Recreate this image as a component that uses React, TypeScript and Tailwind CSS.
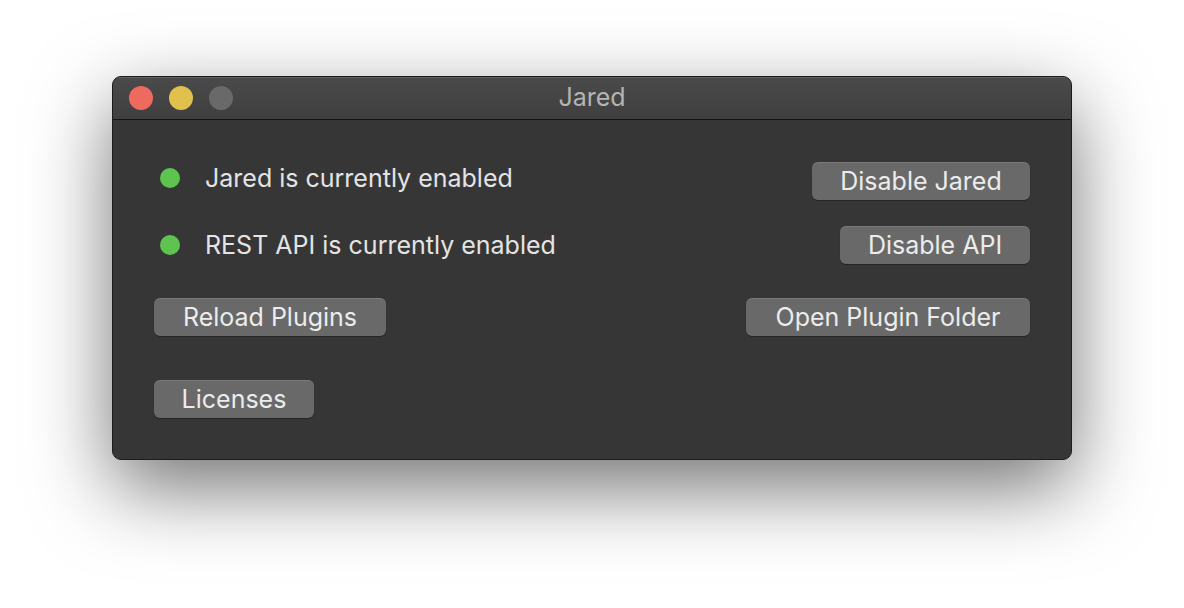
import React from "react"

const font = { fontFamily: "Inter, 'Noto Sans', 'Liberation Sans', sans-serif" }

type BtnProps = { label: string; width: string }

const MacButton: React.FC<BtnProps> = ({ label, width }) => (
  <button
    className={`${width} h-[38px] rounded-[6px] bg-[#696969] text-[25px] leading-none text-[#ececec] shadow-[inset_0_1px_0_rgba(255,255,255,0.12),0_1px_1px_rgba(0,0,0,0.35)]`}
  >
    {label}
  </button>
)

const StatusRow: React.FC<{ text: string }> = ({ text }) => (
  <div className="flex items-center">
    <span className="ml-[6px] h-[20px] w-[20px] rounded-full bg-[#5dc54f]" />
    <span className="ml-[25px] text-[25px] leading-none text-[#e4e4e4]">{text}</span>
  </div>
)

export default function App() {
  return (
    <div className="h-[608px] w-[1184px] bg-white pl-[112px] pt-[76px]" style={font}>
      <div className="flex h-[384px] w-[960px] flex-col overflow-hidden rounded-[9px] border border-[#1c1c1c] bg-[#363636] shadow-[0_28px_80px_rgba(0,0,0,0.55)]">
        {/* title bar */}
        <div className="relative flex h-[43px] items-center border-b border-[#141414] bg-gradient-to-b from-[#4a4a4a] to-[#3f3f3f] shadow-[inset_0_1px_0_rgba(255,255,255,0.12)]">
          <div className="flex gap-[16px] pl-[16px]">
            <span className="h-[24px] w-[24px] rounded-full bg-[#ee6a5e]" />
            <span className="h-[24px] w-[24px] rounded-full bg-[#e2c04d]" />
            <span className="h-[24px] w-[24px] rounded-full bg-[#696969]" />
          </div>
          <div className="absolute inset-0 flex items-center justify-center text-[25px] text-[#b4b4b4]">
            Jared
          </div>
        </div>

        {/* content */}
        <div className="flex flex-col px-[41px]">
          <div className="mt-[42px] flex items-center justify-between">
            <div className="-mt-[6px]">
              <StatusRow text="Jared is currently enabled" />
            </div>
            <MacButton label="Disable Jared" width="w-[218px]" />
          </div>
          <div className="mt-[26px] flex items-center justify-between">
            <StatusRow text="REST API is currently enabled" />
            <MacButton label="Disable API" width="w-[190px]" />
          </div>
          <div className="mt-[34px] flex items-center justify-between">
            <MacButton label="Reload Plugins" width="w-[232px]" />
            <MacButton label="Open Plugin Folder" width="w-[284px]" />
          </div>
          <div className="mt-[44px] flex">
            <MacButton label="Licenses" width="w-[160px]" />
          </div>
        </div>
      </div>
    </div>
  )
}
